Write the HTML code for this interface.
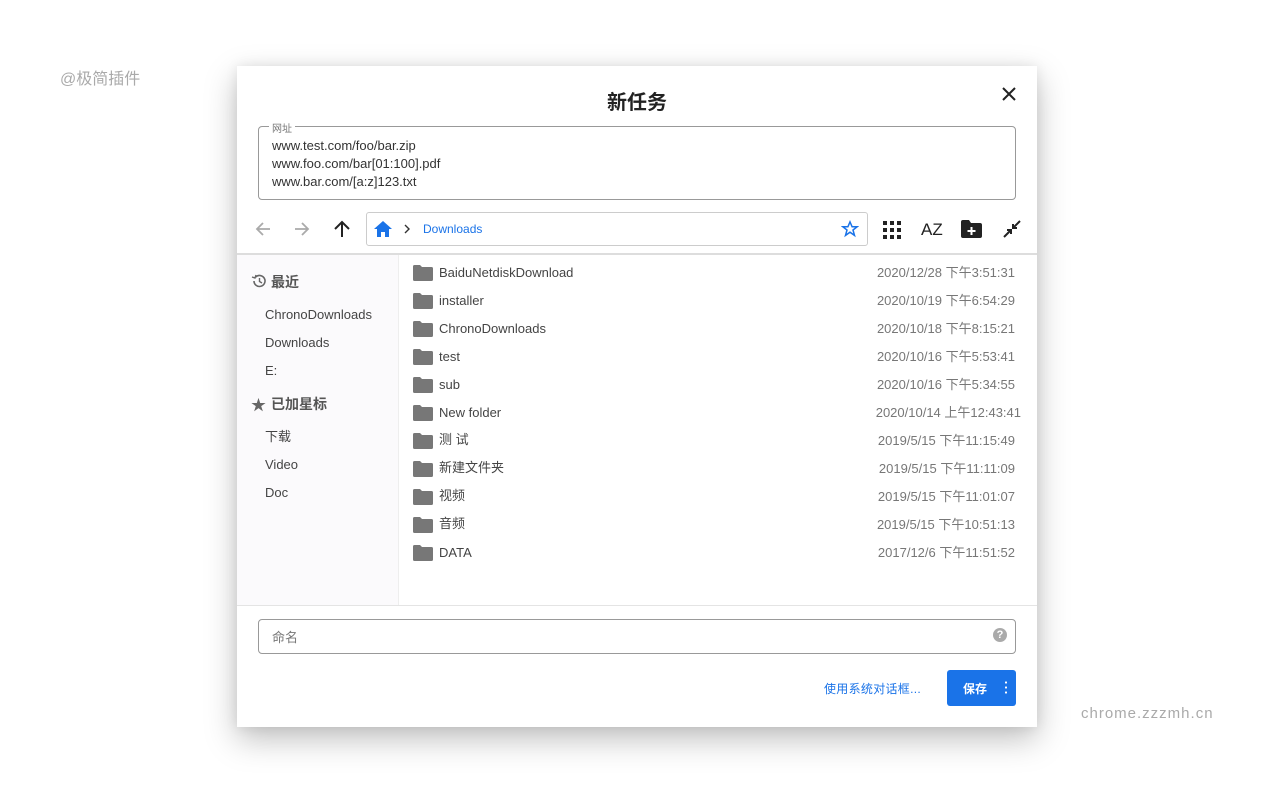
<html><head><style>
body{margin:0;width:1280px;height:800px;background:#fff;font-family:"Liberation Sans","Noto Sans CJK SC",sans-serif;position:relative;overflow:hidden}
.a{position:absolute}
.dlg{left:237px;top:66px;width:800px;height:661px;background:#fff;box-shadow:0 12px 30px rgba(0,0,0,.25),0 0 12px rgba(0,0,0,.08)}
.row{position:absolute;left:176px;width:602px;height:28px;font-size:13px;color:#444;line-height:16px}
.row svg{position:absolute;left:0;top:6px}
.row .n{position:absolute;left:26px;top:6px}
.row .d{position:absolute;right:0;top:6px;color:#777}
.side{font-size:13px;color:#444}
</style></head><body>
<div class="a" style="left:60px;top:65px;font-size:16px;color:#aaa">@极简插件</div>
<div class="a" style="left:1081px;top:705px;font-size:15px;color:#aaa;letter-spacing:1px">chrome.zzzmh.cn</div>
<div class="a dlg">
 <div class="a" style="left:0;width:800px;top:20px;text-align:center;font-size:20px;font-weight:bold;color:#222">新任务</div>
 <svg class="a" style="left:763px;top:19px" width="18" height="18" viewBox="0 0 18 18"><path d="M3 3L15 15M15 3L3 15" stroke="#222" stroke-width="2"/></svg>
 <div class="a" style="left:21px;top:60px;width:756px;height:72px;border:1px solid #999;border-radius:4px"></div>
 <div class="a" style="left:32px;top:54px;background:#fff;padding:0 3px;font-size:10px;color:#777">网址</div>
 <div class="a" style="left:35px;top:71px;font-size:13px;color:#333;line-height:18px">www.test.com/foo/bar.zip<br>www.foo.com/bar[01:100].pdf<br>www.bar.com/[a:z]123.txt</div>
 <svg class="a" style="left:16px;top:153px" width="20" height="20" viewBox="0 0 20 20"><path d="M17 10H4M10 4L4 10L10 16" stroke="#aaa" stroke-width="1.8" fill="none"/></svg>
 <svg class="a" style="left:55px;top:153px" width="20" height="20" viewBox="0 0 20 20"><path d="M3 10H16M10 4L16 10L10 16" stroke="#aaa" stroke-width="1.8" fill="none"/></svg>
 <svg class="a" style="left:95px;top:153px" width="20" height="20" viewBox="0 0 20 20"><path d="M10 18V3M3 10L10 3L17 10" stroke="#222" stroke-width="2" fill="none"/></svg>
 <div class="a" style="left:129px;top:146px;width:500px;height:32px;border:1px solid #ccc;border-radius:3px"></div>
 <svg class="a" style="left:136px;top:154px" width="20" height="18" viewBox="0 0 20 18"><path d="M10 1L1 9H4V17H8V12H12V17H16V9H19Z" fill="#1a73e8"/></svg>
 <svg class="a" style="left:166px;top:158px" width="8" height="10" viewBox="0 0 8 10"><path d="M2 1L6 5L2 9" stroke="#333" stroke-width="1.4" fill="none"/></svg>
 <div class="a" style="left:186px;top:156px;font-size:12px;color:#1a73e8">Downloads</div>
 <svg class="a" style="left:604px;top:154px" width="18" height="18" viewBox="0 0 24 24"><path d="M12 2.5L14.8 9H21.5L16 13.3L18 20.5L12 16.3L6 20.5L8 13.3L2.5 9H9.2Z" fill="none" stroke="#1a73e8" stroke-width="2"/></svg>
 <svg class="a" style="left:646px;top:155px" width="18" height="18" viewBox="0 0 18 18" fill="#222"><rect x="0" y="0" width="4" height="4"/><rect x="7" y="0" width="4" height="4"/><rect x="14" y="0" width="4" height="4"/><rect x="0" y="7" width="4" height="4"/><rect x="7" y="7" width="4" height="4"/><rect x="14" y="7" width="4" height="4"/><rect x="0" y="14" width="4" height="4"/><rect x="7" y="14" width="4" height="4"/><rect x="14" y="14" width="4" height="4"/></svg>
 <div class="a" style="left:684px;top:154px;font-size:17px;color:#222">AZ</div>
 <svg class="a" style="left:724px;top:154px" width="21" height="18" viewBox="0 0 21 18"><path d="M0 2Q0 0 2 0H8L10 3H19Q21 3 21 5V16Q21 18 19 18H2Q0 18 0 16Z" fill="#222"/><path d="M10.5 7V15M6.5 11H14.5" stroke="#fff" stroke-width="2"/></svg>
 <svg class="a" style="left:766px;top:154px" width="18" height="18" viewBox="0 0 18 18"><path d="M1 17L8 10M4 10H8V14M17 1L10 8M10 4V8H14" stroke="#222" stroke-width="2" fill="none"/></svg>
 <div class="a" style="left:0;top:187px;width:800px;height:2px;background:#ddd"></div>
 <div class="a" style="left:0;top:189px;width:161px;height:350px;background:#fbfafc;border-right:1px solid #eee"></div>
 <svg class="a" style="left:14px;top:207px" width="16" height="16" viewBox="0 0 16 16"><path d="M3 8A5.5 5.5 0 1 0 4.6 4.1" stroke="#666" stroke-width="1.6" fill="none"/><path d="M1 4L4 5L5 2" stroke="#666" stroke-width="1.4" fill="none"/><path d="M8.5 5V8.5L11 10" stroke="#666" stroke-width="1.4" fill="none"/></svg>
 <div class="a side" style="left:34px;top:206px;font-size:14px;color:#555;font-weight:bold">最近</div>
 <div class="a side" style="left:28px;top:241px">ChronoDownloads</div>
 <div class="a side" style="left:28px;top:269px">Downloads</div>
 <div class="a side" style="left:28px;top:297px">E:</div>
 <div class="a side" style="left:14px;top:328px;font-size:15px;color:#666">★</div>
 <div class="a side" style="left:34px;top:328px;font-size:14px;color:#555;font-weight:bold">已加星标</div>
 <div class="a side" style="left:28px;top:360px">下载</div>
 <div class="a side" style="left:28px;top:391px">Video</div>
 <div class="a side" style="left:28px;top:419px">Doc</div>
 <div class="row" style="top:193px"><svg width="20" height="16" viewBox="0 0 20 16"><path d="M0 1.5Q0 0 1.5 0H7L9 2H18.5Q20 2 20 3.5V14.5Q20 16 18.5 16H1.5Q0 16 0 14.5Z" fill="#777"/></svg><span class="n">BaiduNetdiskDownload</span><span class="d">2020/12/28 下午3:51:31</span></div>
 <div class="row" style="top:221px"><svg width="20" height="16" viewBox="0 0 20 16"><path d="M0 1.5Q0 0 1.5 0H7L9 2H18.5Q20 2 20 3.5V14.5Q20 16 18.5 16H1.5Q0 16 0 14.5Z" fill="#777"/></svg><span class="n">installer</span><span class="d">2020/10/19 下午6:54:29</span></div>
 <div class="row" style="top:249px"><svg width="20" height="16" viewBox="0 0 20 16"><path d="M0 1.5Q0 0 1.5 0H7L9 2H18.5Q20 2 20 3.5V14.5Q20 16 18.5 16H1.5Q0 16 0 14.5Z" fill="#777"/></svg><span class="n">ChronoDownloads</span><span class="d">2020/10/18 下午8:15:21</span></div>
 <div class="row" style="top:277px"><svg width="20" height="16" viewBox="0 0 20 16"><path d="M0 1.5Q0 0 1.5 0H7L9 2H18.5Q20 2 20 3.5V14.5Q20 16 18.5 16H1.5Q0 16 0 14.5Z" fill="#777"/></svg><span class="n">test</span><span class="d">2020/10/16 下午5:53:41</span></div>
 <div class="row" style="top:305px"><svg width="20" height="16" viewBox="0 0 20 16"><path d="M0 1.5Q0 0 1.5 0H7L9 2H18.5Q20 2 20 3.5V14.5Q20 16 18.5 16H1.5Q0 16 0 14.5Z" fill="#777"/></svg><span class="n">sub</span><span class="d">2020/10/16 下午5:34:55</span></div>
 <div class="row" style="top:333px"><svg width="20" height="16" viewBox="0 0 20 16"><path d="M0 1.5Q0 0 1.5 0H7L9 2H18.5Q20 2 20 3.5V14.5Q20 16 18.5 16H1.5Q0 16 0 14.5Z" fill="#777"/></svg><span class="n">New folder</span><span class="d" style="right:-6px">2020/10/14 上午12:43:41</span></div>
 <div class="row" style="top:361px"><svg width="20" height="16" viewBox="0 0 20 16"><path d="M0 1.5Q0 0 1.5 0H7L9 2H18.5Q20 2 20 3.5V14.5Q20 16 18.5 16H1.5Q0 16 0 14.5Z" fill="#777"/></svg><span class="n" style="top:5px">测 试</span><span class="d">2019/5/15 下午11:15:49</span></div>
 <div class="row" style="top:389px"><svg width="20" height="16" viewBox="0 0 20 16"><path d="M0 1.5Q0 0 1.5 0H7L9 2H18.5Q20 2 20 3.5V14.5Q20 16 18.5 16H1.5Q0 16 0 14.5Z" fill="#777"/></svg><span class="n" style="top:5px">新建文件夹</span><span class="d">2019/5/15 下午11:11:09</span></div>
 <div class="row" style="top:417px"><svg width="20" height="16" viewBox="0 0 20 16"><path d="M0 1.5Q0 0 1.5 0H7L9 2H18.5Q20 2 20 3.5V14.5Q20 16 18.5 16H1.5Q0 16 0 14.5Z" fill="#777"/></svg><span class="n" style="top:5px">视频</span><span class="d">2019/5/15 下午11:01:07</span></div>
 <div class="row" style="top:445px"><svg width="20" height="16" viewBox="0 0 20 16"><path d="M0 1.5Q0 0 1.5 0H7L9 2H18.5Q20 2 20 3.5V14.5Q20 16 18.5 16H1.5Q0 16 0 14.5Z" fill="#777"/></svg><span class="n" style="top:5px">音频</span><span class="d">2019/5/15 下午10:51:13</span></div>
 <div class="row" style="top:473px"><svg width="20" height="16" viewBox="0 0 20 16"><path d="M0 1.5Q0 0 1.5 0H7L9 2H18.5Q20 2 20 3.5V14.5Q20 16 18.5 16H1.5Q0 16 0 14.5Z" fill="#777"/></svg><span class="n">DATA</span><span class="d">2017/12/6 下午11:51:52</span></div>
 <div class="a" style="left:0;top:539px;width:800px;height:1px;background:#e4e4e4"></div>
 <div class="a" style="left:21px;top:553px;width:756px;height:33px;border:1px solid #999;border-radius:4px"></div>
 <div class="a" style="left:35px;top:561px;font-size:13px;color:#777">命名</div>
 <div class="a" style="left:756px;top:562px;width:14px;height:14px;border-radius:50%;background:#aaa;color:#fff;font-size:11px;font-weight:bold;text-align:center;line-height:14px">?</div>
 <div class="a" style="left:587px;top:614px;font-size:12px;color:#1a73e8;letter-spacing:.3px">使用系统对话框...</div>
 <div class="a" style="left:710px;top:604px;width:69px;height:36px;background:#1a73e8;border-radius:3px"></div>
 <div class="a" style="left:726px;top:614px;font-size:12px;color:#fff;font-weight:bold">保存</div>
 <div class="a" style="left:768px;top:614px;width:2px;height:14px;background:radial-gradient(circle,#fff 1px,transparent 1.2px) 0 0/2px 5px"></div>
</div>
</body></html>
